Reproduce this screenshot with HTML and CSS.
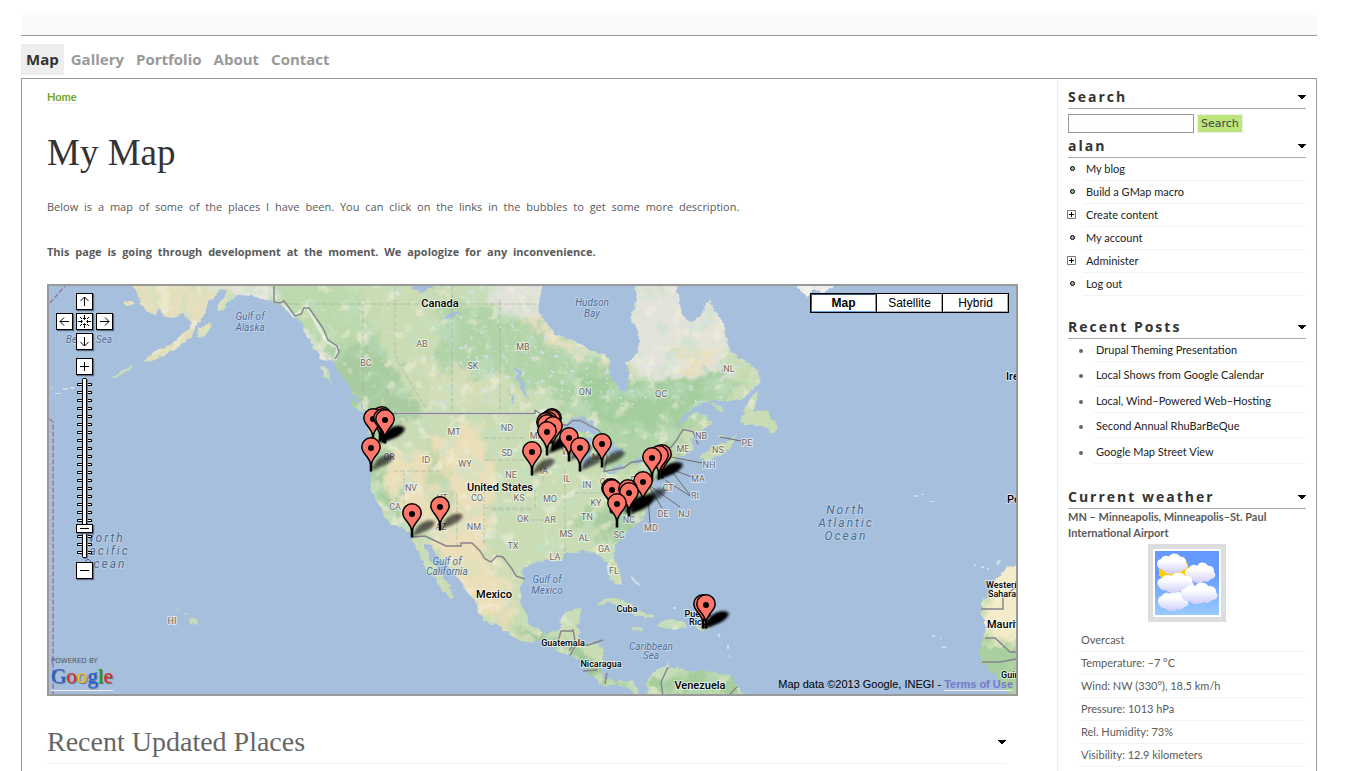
FILE: index.html
```html
<!DOCTYPE html>
<html lang="en">
<head>
<meta charset="utf-8">
<title>My Map</title>
<link rel="stylesheet" href="styles.css">
</head>
<body class="page">
<header class="banner"></header>
<nav class="tabs" aria-label="Primary">
  <a class="tab tab-active" href="#map">Map</a>
  <a class="tab" href="#gallery">Gallery</a>
  <a class="tab" href="#portfolio">Portfolio</a>
  <a class="tab" href="#about">About</a>
  <a class="tab" href="#contact">Contact</a>
</nav>
<div class="frame">
<main class="main">
  <div class="crumbs"><a class="crumb" href="#home">Home</a></div>
  <h1 class="title">My Map</h1>
  <p class="copy">Below is a map of some of the places I have been. You can click on the links in the bubbles to get some more description.</p>
  <p class="copy copy-strong">This page is going through development at the moment. We apologize for any inconvenience.</p>

  <section class="map" id="map" aria-label="Map of places">
    <svg class="map-canvas" viewBox="49 286 967 408" preserveAspectRatio="xMidYMid slice">
      <defs>
        <filter id="rough" x="-2%" y="-2%" width="104%" height="104%"><feTurbulence type="fractalNoise" baseFrequency=".16" numOctaves="3" seed="4"/><feDisplacementMap in="SourceGraphic" scale="6" xChannelSelector="R" yChannelSelector="G"/></filter>
        <filter id="patchy" x="-10%" y="-10%" width="120%" height="120%"><feTurbulence type="fractalNoise" baseFrequency=".06" numOctaves="4" seed="9" result="n"/><feGaussianBlur in="SourceGraphic" stdDeviation="3"/><feDisplacementMap in2="n" scale="32" xChannelSelector="R" yChannelSelector="G"/></filter>
        <filter id="forest" x="0" y="0" width="100%" height="100%"><feTurbulence type="fractalNoise" baseFrequency=".05" numOctaves="5" seed="21"/><feColorMatrix values="0 0 0 0 .55  0 0 0 0 .76  0 0 0 0 .57  5 0 0 0 -2.5"/></filter>
        <filter id="dry" x="0" y="0" width="100%" height="100%"><feTurbulence type="fractalNoise" baseFrequency=".07" numOctaves="5" seed="33"/><feColorMatrix values="0 0 0 0 .93  0 0 0 0 .88  0 0 0 0 .74  0 6 0 0 -3.5"/></filter>
        <filter id="lakes" x="0" y="0" width="100%" height="100%"><feTurbulence type="fractalNoise" baseFrequency=".2" numOctaves="3" seed="14"/><feColorMatrix values="0 0 0 0 .647  0 0 0 0 .749  0 0 0 0 .867  0 0 12 0 -8"/></filter>
        <filter id="soft" x="-40%" y="-60%" width="180%" height="220%"><feGaussianBlur stdDeviation="1.4"/></filter>
        <g id="land">
          <path d="M130 284L137 293 140 303 147 312 157 315 158 308 165 317 173 318 183 313 192 322 187 330 173 343 163 348 153 353 143 361 150 361 163 356 177 349 190 337 200 322 206 312 209 303 214 296 222 289 228 292 219 303 216 311 224 308 232 299 240 293 253 297 267 300 280 304 293 316 301 321 306 334 314 348 322 359 334 361 337 371 348 383 354 395 364 407 368 413 367 425 370 440 371 470 370 480 372 493 378 502 385 517 392 525 405 530 412 537 415 547 422 560 427 572 437 580 440 588 450 599 455 597 450 588 443 578 437 568 430 560 424 544 432 545 435 553 447 565 458 580 467 592 477 603 478 613 487 622 500 627 513 637 528 643 540 642 552 647 560 653 573 656 583 662 588 672 595 680 607 687 617 685 630 689 637 696 648 696 646 682 653 672 662 667 670 663 668 670 678 667 687 672 700 670 717 673 730 675 737 687 745 696 640 696 637 688 633 680 623 682 613 680 605 678 600 670 602 660 603 647 593 643 583 645 578 642 580 632 577 627 582 608 565 612 560 620 563 629 550 633 540 631 530 625 525 612 521 600 520 588 523 578 522 570 530 563 550 560 560 562 565 555 573 552 583 551 593 552 602 557 607 563 608 575 615 584 620 585 621 577 617 563 613 552 618 540 630 530 643 520 645 510 648 503 652 493 653 483 660 477 667 473 673 472 673 463 680 457 693 450 696 447 690 440 700 432 711 425 707 413 693 413 683 423 674 429 684 415 697 406 713 401 730 401 744 398 751 391 760 382 759 372 750 363 740 358 730 350 727 337 722 320 715 310 708 299 703 312 693 323 683 317 680 305 677 293 677 284 635 284 637 300 630 318 638 330 640 347 633 357 625 362 628 373 627 387 623 392 615 383 610 375 609 357 590 350 573 340 555 335 550 327 543 318 538 308 540 297 543 284Z"/>
          <path d="M758 390L747 403 740 423 763 427 775 433 777 427 767 410 753 412 757 400Z"/><path d="M699 458L712 446 727 443 736 434 732 447 710 461Z"/><path d="M711 404l10 2 5 5-9-1zM715 433l12 4-5 1z"/>
          <path d="M596 603L604 599 616 598 628 603 640 611 655 616 647 618 634 614 626 607 610 602 600 605Z"/><path d="M658 623L667 619 680 621 688 627 673 630 658 626Z"/><path d="M632 627l11 1 0 3-10-1zM696 626l14 1 0 3-14 0z"/>
          <path d="M320 366l8 2 2 11 3 6-8-8zM348 397l10 5 9 12-10-4zM198 330l12-8 2 6-9 10-5-1zM125 301l9 0 0 5-9-1zM112 377l18-11 3 1-18 12z"/>
          <path d="M1018 562L1007 567 997 580 992 590 982 603 981 612 985 623 984 637 979 648 982 662 993 673 1000 683 1010 696H1018Z"/><path d="M796 284L807 297 815 289 823 294 836 284Z"/><path d="M190 616l5 3 2 4-6 2zM184 612l4 2-3 1zM176 608l4 1-3 2z"/>
        </g>
        <mask id="landmask" maskUnits="userSpaceOnUse" x="40" y="280" width="990" height="420"><use href="#land" fill="#fff" filter="url(#rough)"/></mask>
        <g id="pin"><path d="M0 23V17C-2 8-9.200 5.500-9.200-1A9.200 9.200 0 0 1 9.200-1C9.200 5.500 2 8 0 17Z" fill="#fe7569" stroke="#000" stroke-width="1.500"/><path d="M0 14v9.500" stroke="#000" stroke-width="2.600"/><circle r="3"/></g>
        <g id="shade" filter="url(#soft)"><path d="M0 23C3 16 5 11 12 8 19 5 25 7 22 11 18 17 8 19 0 23Z"/></g>
      </defs>
      <rect x="40" y="280" width="990" height="420" fill="#a5bfdd"/>
      <g mask="url(#landmask)">
        <rect x="40" y="280" width="990" height="420" fill="#cadcb4"/>
        <g filter="url(#patchy)">
          <path d="M110 280h115v75H110z" fill="#e4dfbc"/>
          <path d="M210 280h60l75 95-50-20-50-50z" fill="#e8e6df"/>
          <path d="M255 280h95l40 70-20 25-45-15z" fill="#bcd8ac"/>
          <path d="M320 350l60-10 45 80-65 5z" fill="#a8cca0"/>
          <path d="M440 300l120 30 70 50 60 0 60 0-60 50-80 50-60-90-110-20z" fill="#b0d3a7"/>
          <path d="M490 280h65v45l-60-15zM630 280h55l40 20 5 70-60 10-45-15z" fill="#e4e3da"/>
          <path d="M520 310l40 25 60 18 0 8-70-15zM670 345l60 10-40 20z" fill="#e8e0bf"/>
          <path d="M560 375h120l50-5-50 50-30 20-60-20z" fill="#a5ce9f"/>
          <path d="M425 365l70 10 20 20-80 15z" fill="#d5ddb6"/>
          <path d="M385 445l30 10 60-35 20 50-10 80 30 40-5 45-40-30-55-85-30-40z" fill="#ebdfb9"/>
          <path d="M368 420h15v60l20 30-10 10-23-40z" fill="#a7ce9f"/>
          <path d="M425 430l15 30 20 50-20 10-15-50z" fill="#c6d6aa"/>
          <path d="M570 520l50-20 40-50 30-10-30 50-40 50z" fill="#a8cca0"/>
          <path d="M480 600l30 28 60 15 60 45-50-15-50-30z" fill="#9cc596"/>
          <path d="M640 675l100-5v26H640z" fill="#a5cc9b"/>
          <path d="M985 550h40v90h-40z" fill="#f4ecc9"/><path d="M975 643h45v55h-45z" fill="#a9cf9f"/>
          <path d="M790 280h50v20h-50z" fill="#f0f0ec"/>
        </g>
        <rect x="40" y="280" width="720" height="420" filter="url(#forest)" opacity=".45"/>
        <rect x="40" y="280" width="720" height="420" filter="url(#dry)" opacity=".5"/>
        <rect x="430" y="280" width="330" height="125" filter="url(#lakes)" opacity=".8"/>
      </g>
      <g fill="#a5bfdd" filter="url(#rough)"><path d="M562 427L572 418 583 417 592 422 600 437 588 431 574 432Z"/><path d="M586 437l5 0-1 14-2 18-5-2 0-15z"/><path d="M598 437l12 3 10 9 2 6-8-3-3 6-5-11z"/><path d="M604 474l16-9 4 1-12 8zM628 462l16-4 3 3-17 3z"/><path d="M514 368l6 2 8 30-5-6zM508 390l7 10-3 2zM410 286l24 0-12 7zM440 320l14-8 8-1-10 7z"/></g>
      <g fill="none" stroke="#fff" stroke-opacity=".5" stroke-width="3"><path d="M397 413.500H535L545 410 560 425"/><path d="M280 301l14 15 13-9 20 35 11 5-3 13"/></g>
      <g fill="none" stroke="#85828c" stroke-width="1.400">
        <path d="M274 286v16l6 1 4-2 11 15 6-2 3-6 5 0 14 20 5 12 9 6 2 6-4 7M393 413.500H535v-3l9 5 15 8 8 2 6-5 7 0 19 10 6 8 2 20-3 13 20-4 7-5 12-2 13-8 15-5 6-8 6-10 10 2 5 13"/>
        <path d="M413 537l12-1 21 10h15v-3h11l8 8 5 8 6 3 6-6 6 1 9 12 4 7 9 3"/>
        <path d="M557 645l4-14h12v-2l2 12-6 10M570 655l6-10h12l15-5M583 671l14-1M605 684l2-11M663 696l-2-14 7-15M730 694l7-7"/>
        <path d="M981 609h22v-12l13-10V581M985 638h10l15 14 6 0M982 662l18 0 16-3"/>
      </g>
      <g fill="none" stroke="#9a9e94" stroke-opacity=".45" stroke-dasharray="5 2"><path d="M395 286v70M452 286v127M500 300v113M543 413v70M280 304h260M363 304V400M395 356l35 60"/><path d="M484 438h42M484 460h44M440 471h-48M484 508h50M457 493v52M404 471v40M484 490v55M535 490v20M492 510h40M525 520h30M565 470v90M575 493h70"/></g>
      <g stroke="#97799b" fill="none" stroke-width="1.500" stroke-dasharray="5 2"><path d="M50 303l15-17M49.500 419l3.500 3v272"/></g>
      <g stroke="#6e6b68" fill="none"><path d="M720 437l21 4M671 457l31 6M676 471l16 6M665 480l25 16M670 469l20 26M650 486l30 21M650 488l12 20M648 495l2 29"/></g>
      <g fill="#dbe5ea" opacity=".8"><path d="M630 576l3 1 3 4 4 3-1 2-4-3-4-5zM673 607h3v2h-3zM718 634h2v3h-2zM727 645h2v4h-2zM729 655h1v3h-1zM932 635h3v2h-3zM940 638h2v1h-2zM942 646h4v2h-4zM914 495h4v2h-4zM921 494h3v1h-3zM930 501h5v1h-5zM974 564h2v2h-2zM981 566h3v2h-3zM987 568h2v2h-2zM996 562l3-2 2 0-3 6zM51 388h2v1h-2zM63 388h5v2h-5zM70 387h4v2h-4zM55 393h6v1h-6z"/></g>
      <g class="label label-state" text-anchor="middle"><text x="366" y="366">BC</text><text x="422" y="347">AB</text><text x="473" y="369">SK</text><text x="523" y="350">MB</text><text x="585" y="395">ON</text><text x="661" y="397">QC</text><text x="729" y="372">NL</text><text x="454" y="435">MT</text><text x="507" y="431">ND</text><text x="507" y="456">SD</text><text x="426" y="463">ID</text><text x="465" y="467">WY</text><text x="389" y="460">OR</text><text x="411" y="491">NV</text><text x="511" y="478">NE</text><text x="442" y="501">UT</text><text x="477" y="501">CO</text><text x="519" y="501">KS</text><text x="395" y="510">CA</text><text x="441" y="530">AZ</text><text x="474" y="530">NM</text><text x="523" y="522">OK</text><text x="513" y="549">TX</text><text x="537" y="439">MN</text><text x="567" y="455">WI</text><text x="597" y="460">MI</text><text x="544" y="474">IA</text><text x="567" y="482">IL</text><text x="587" y="488">IN</text><text x="606" y="485">OH</text><text x="636" y="483">PA</text><text x="550" y="502">MO</text><text x="596" y="506">KY</text><text x="587" y="520">TN</text><text x="550" y="523">AR</text><text x="566" y="537">MS</text><text x="584" y="541">AL</text><text x="604" y="552">GA</text><text x="619" y="538">SC</text><text x="629" y="523">NC</text><text x="555" y="560">LA</text><text x="614" y="574">FL</text><text x="683" y="452">ME</text><text x="701" y="439">NB</text><text x="718" y="453">NS</text><text x="747" y="446">PE</text><text x="709" y="468">NH</text><text x="698" y="482">MA</text><text x="668" y="491">CT</text><text x="695" y="499">RI</text><text x="684" y="517">NJ</text><text x="663" y="517">DE</text><text x="651" y="531">MD</text><text x="172" y="624">HI</text></g>
      <g class="label label-country" text-anchor="middle"><text x="440" y="307">Canada</text><text x="500" y="491">United States</text><text x="494" y="598">Mexico</text><text x="700" y="689">Venezuela</text></g>
      <g class="label label-country label-small" text-anchor="middle"><text x="627" y="612">Cuba</text><text x="563" y="646">Guatemala</text><text x="601" y="667">Nicaragua</text><text x="698" y="617">Puerto</text><text x="698" y="625">Rico</text></g>
      <g class="label label-country"><text x="1006" y="380">Ireland</text><text x="1007" y="503">Portugal</text><text x="987" y="628">Mauritania</text></g>
      <g class="label label-country label-small"><text x="986" y="588">Western</text><text x="988" y="597">Sahara</text><text x="1001" y="678">Guinea</text></g>
      <g class="label label-sea" text-anchor="middle"><text x="250" y="320">Gulf of</text><text x="250" y="331">Alaska</text><text x="592" y="306">Hudson</text><text x="592" y="317">Bay</text><text x="447" y="565">Gulf of</text><text x="447" y="575">California</text><text x="547" y="583">Gulf of</text><text x="547" y="594">Mexico</text><text x="651" y="650">Caribbean</text><text x="651" y="659">Sea</text><text x="89" y="343">Bering Sea</text></g>
      <g class="label label-ocean" text-anchor="middle"><text x="846" y="514">North</text><text x="846" y="527">Atlantic</text><text x="846" y="540">Ocean</text><text x="105" y="542">North</text><text x="105" y="555">Pacific</text><text x="105" y="568">Ocean</text></g>
      <g>
        <g opacity=".6"><use href="#shade" x="371" y="448"/><use href="#shade" x="412" y="514"/><use href="#shade" x="440" y="507"/><use href="#shade" x="532" y="452"/><use href="#shade" x="569" y="438"/><use href="#shade" x="580" y="448"/><use href="#shade" x="602" y="444"/><use href="#shade" x="643" y="482"/></g>
        <use href="#shade" x="382" y="420"/><use href="#shade" x="379" y="420"/><use href="#shade" x="552" y="427"/><use href="#shade" x="548" y="431"/><use href="#shade" x="660" y="456"/><use href="#shade" x="656" y="457"/><use href="#shade" x="624" y="490"/><use href="#shade" x="629" y="492"/><use href="#shade" x="632" y="488"/><use href="#shade" x="706" y="605"/><use href="#shade" x="703" y="606"/>
      </g>
      <g><use href="#pin" x="380" y="418"/><use href="#pin" x="382" y="417"/><use href="#pin" x="373" y="419"/><use href="#pin" x="383" y="419"/><use href="#pin" x="385" y="420"/><use href="#pin" x="371" y="448"/>
      <use href="#pin" x="552" y="419"/><use href="#pin" x="551" y="420"/><use href="#pin" x="548" y="422"/><use href="#pin" x="546" y="423"/><use href="#pin" x="547" y="425"/><use href="#pin" x="553" y="427"/><use href="#pin" x="547" y="432"/><use href="#pin" x="569" y="438"/><use href="#pin" x="602" y="444"/><use href="#pin" x="580" y="448"/><use href="#pin" x="532" y="452"/>
      <use href="#pin" x="662" y="455"/><use href="#pin" x="659" y="456"/><use href="#pin" x="652" y="458"/><use href="#pin" x="643" y="482"/><use href="#pin" x="611" y="489"/><use href="#pin" x="612" y="490"/><use href="#pin" x="628" y="490"/><use href="#pin" x="629" y="493"/><use href="#pin" x="617" y="504"/><use href="#pin" x="440" y="507"/><use href="#pin" x="412" y="514"/><use href="#pin" x="703" y="605"/><use href="#pin" x="706" y="605"/></g>
    </svg>

    <div class="controls">
      <div class="pan">
        <button class="key pan-up" aria-label="Pan up"><svg class="key-icon" viewBox="0 0 13 13"><path d="M6.500 11V2M2.500 6l4-4 4 4"/></svg></button>
        <button class="key pan-left" aria-label="Pan left"><svg class="key-icon" viewBox="0 0 13 13"><path d="M11 6.500H2M6 2.500l-4 4 4 4"/></svg></button>
        <button class="key pan-home" aria-label="Return to last position"><svg class="key-icon" viewBox="0 0 13 13"><path d="M6.500 0v4M6.500 9v4M0 6.500h4M9 6.500h4M5 3l1.500 1.500L8 3M5 10l1.500-1.500L8 10M3 5l1.500 1.500L3 8M10 5L8.500 6.500 10 8M2 2l2 2M11 2L9 4M2 11l2-2M11 11L9 9"/></svg></button>
        <button class="key pan-right" aria-label="Pan right"><svg class="key-icon" viewBox="0 0 13 13"><path d="M2 6.500h9M7 2.500l4 4-4 4"/></svg></button>
        <button class="key pan-down" aria-label="Pan down"><svg class="key-icon" viewBox="0 0 13 13"><path d="M6.500 2v9M2.500 7l4 4 4-4"/></svg></button>
      </div>
      <div class="zoom">
        <button class="key" aria-label="Zoom in"><svg class="key-icon" viewBox="0 0 13 13"><path d="M6.500 2v9M2 6.500h9"/></svg></button>
        <div class="slider">
          <svg class="rail" viewBox="0 0 17 181"><defs><pattern id="ticks" width="17" height="8" patternUnits="userSpaceOnUse"><path d="M2 6.500h14.500v2H2" fill="#6a7c93"/><rect x="1" y="5" width="15" height="3" rx="1"/><rect x="2" y="6" width="13" height="1" fill="#fff"/></pattern></defs><rect y="2" width="17" height="174" fill="url(#ticks)"/><rect x="7" y="1" width="5" height="180" rx="2" fill="#6a7c93"/><rect x="6" width="5" height="180" rx="2"/><rect x="7" y="1" width="3" height="178" fill="#fff"/></svg>
          <input class="range" type="range" min="0" max="172" value="26" aria-label="Zoom level">
        </div>
        <button class="key" aria-label="Zoom out"><svg class="key-icon" viewBox="0 0 13 13"><path d="M2 6.500h9"/></svg></button>
      </div>
    </div>
    <div class="types"><button class="type type-on">Map</button><button class="type">Satellite</button><button class="type">Hybrid</button></div>
    <a class="logo" href="#google"><span class="powered">POWERED BY</span><span class="wordmark"><span class="blue">G</span><span class="red">o</span><span class="yellow">o</span><span class="blue">g</span><span class="green">l</span><span class="red">e</span></span></a>
    <div class="legal">Map data ©2013 Google, INEGI - <a class="terms" href="#terms">Terms of Use</a></div>
  </section>
  <h2 class="updated">Recent Updated Places <svg class="arrow" viewBox="0 0 8 4"><path d="M0 0h8v1H7v1H6v1H5v1H3V3H2V2H1V1H0z"/></svg></h2>
</main>

<aside class="side">
  <h3 class="head">Search <svg class="arrow" viewBox="0 0 8 4"><path d="M0 0h8v1H7v1H6v1H5v1H3V3H2V2H1V1H0z"/></svg></h3>
  <form class="search"><input class="field" type="text" aria-label="Search"><button class="go" type="submit">Search</button></form>
  <h3 class="head">alan <svg class="arrow" viewBox="0 0 8 4"><path d="M0 0h8v1H7v1H6v1H5v1H3V3H2V2H1V1H0z"/></svg></h3>
  <ul class="menu">
    <li class="menu-row"><svg class="mark" viewBox="0 0 9 9"><circle class="ring" cx="5.500" cy="4.500" r="2"/></svg><a class="link" href="#blog">My blog</a></li>
    <li class="menu-row"><svg class="mark" viewBox="0 0 9 9"><circle class="ring" cx="5.500" cy="4.500" r="2"/></svg><a class="link" href="#macro">Build a GMap macro</a></li>
    <li class="menu-row"><svg class="mark" viewBox="0 0 9 9"><path class="box" d="M.5.5h8v8h-8z"/><path class="cross" d="M2 4.500h5M4.500 2v5"/></svg><a class="link" href="#create">Create content</a></li>
    <li class="menu-row"><svg class="mark" viewBox="0 0 9 9"><circle class="ring" cx="5.500" cy="4.500" r="2"/></svg><a class="link" href="#account">My account</a></li>
    <li class="menu-row"><svg class="mark" viewBox="0 0 9 9"><path class="box" d="M.5.5h8v8h-8z"/><path class="cross" d="M2 4.500h5M4.500 2v5"/></svg><a class="link" href="#administer">Administer</a></li>
    <li class="menu-row"><svg class="mark" viewBox="0 0 9 9"><circle class="ring" cx="5.500" cy="4.500" r="2"/></svg><a class="link" href="#logout">Log out</a></li>
  </ul>
  <h3 class="head">Recent Posts <svg class="arrow" viewBox="0 0 8 4"><path d="M0 0h8v1H7v1H6v1H5v1H3V3H2V2H1V1H0z"/></svg></h3>
  <ul class="posts">
    <li class="post"><a class="link" href="#p1">Drupal Theming Presentation</a></li>
    <li class="post"><a class="link" href="#p2">Local Shows from Google Calendar</a></li>
    <li class="post"><a class="link" href="#p3">Local, Wind–Powered Web–Hosting</a></li>
    <li class="post"><a class="link" href="#p4">Second Annual RhuBarBeQue</a></li>
    <li class="post"><a class="link" href="#p5">Google Map Street View</a></li>
  </ul>
  <h3 class="head">Current weather <svg class="arrow" viewBox="0 0 8 4"><path d="M0 0h8v1H7v1H6v1H5v1H3V3H2V2H1V1H0z"/></svg></h3>
  <p class="station">MN – Minneapolis, Minneapolis–St. Paul International Airport</p>
  <svg class="sky" viewBox="0 0 64 64" role="img" aria-label="Overcast">
    <defs><linearGradient id="air" x2="0" y2="1"><stop offset=".35" stop-color="#69f"/><stop offset="1" stop-color="#9cf"/></linearGradient><linearGradient id="puff" x2="0" y2="1"><stop offset=".35" stop-color="#fff"/><stop offset="1" stop-color="#cfcdf8"/></linearGradient>
    <path id="cloud" d="M6 6A5 5 0 0 1 14 4A6 6 0 0 1 25 4A5 5 0 0 1 31 10A4 4 0 0 1 28 17A5 5 0 0 1 21 19A7 5 0 0 1 9 18A5 5 0 0 1 3 14A5 5 0 0 1 6 6Z" fill="url(#puff)"/></defs>
    <path d="M0 0h64v64H0z" fill="url(#air)"/><circle cx="19" cy="19" r="15" fill="#fc0"/>
    <use href="#cloud" x="28" y="11"/><use href="#cloud" x="1" y="39"/><use href="#cloud" transform="translate(0 21) scale(1.200 1)"/><use href="#cloud" transform="translate(23 31) scale(1.220 1.050)"/><use href="#cloud" x="0" y="2"/><path d="M4 17l5 3v5H4z" fill="#fc0"/>
  </svg>
  <ul class="facts"><li class="fact">Overcast</li><li class="fact">Temperature: –7 °C</li><li class="fact">Wind: NW (330°), 18.5 km/h</li><li class="fact">Pressure: 1013 hPa</li><li class="fact">Rel. Humidity: 73%</li><li class="fact">Visibility: 12.9 kilometers</li></ul>
</aside>
</div>
</body>
</html>
```
FILE: styles.css
```css
* { box-sizing: border-box; }
.page { display: flex; flex-direction: column; min-height: 100vh; margin: 0; padding: 15px 39px 0 21px; background: #fff; color: #5a5a5a; font: 11px/16px "Open Sans", "Noto Sans", sans-serif; }
.banner { height: 21px; background: #fafafa; border-bottom: 1px solid #999; }
.tabs { display: flex; gap: 2px; padding: 8px 0 3px; }
.tab { padding: 0 5px 1px; color: #999; font: bold 15px/30px "Open Sans", sans-serif; text-decoration: none; }
.tab-active { background: #eee; color: #333; }
.frame { flex: 1; display: grid; grid-template-columns: minmax(0, 1fr) 259px; border: 1px solid #999; border-bottom: 0; }
.main { padding: 9px 39px 0 25px; }
.crumbs { line-height: 18px; }
.crumb { color: #6fa522; font-family: Lato, sans-serif; font-weight: bold; text-decoration: none; border-bottom: 1px solid #eee; }
.title { margin: 27px 0 25px; color: #333; font: 37px/40px "Liberation Serif", serif; }
.copy { margin: 0 0 27px; line-height: 18px; word-spacing: 3px; }
.copy-strong { margin-bottom: 23px; font-weight: bold; }
.map { position: relative; height: 412px; border: 2px solid #999; overflow: hidden; background: #a5bfdd; }
.map-canvas { display: block; width: 100%; height: 100%; }
.label { font-family: Roboto, sans-serif; paint-order: stroke; stroke: #fff; stroke-opacity: .6; stroke-width: 2px; stroke-linejoin: round; }
.label-state { fill: #70655c; font-size: 9px; }
.label-country { fill: #000; font-size: 11px; font-weight: 500; }
.label-small { font-size: 9px; }
.label-sea { fill: #4e6f9c; font-size: 10px; font-style: italic; stroke-opacity: .25; }
.label-ocean { fill: #4e6b92; font-size: 12px; font-style: italic; letter-spacing: 2px; stroke-opacity: .25; }
.controls { position: absolute; left: 7px; top: 7px; display: flex; flex-direction: column; align-items: center; gap: 8px; }
.pan { display: grid; grid-template: repeat(3, 17px) / repeat(3, 17px); gap: 3px; }
.pan-up { grid-area: 1 / 2; }
.pan-left { grid-area: 2 / 1; }
.pan-home { grid-area: 2 / 2; }
.pan-right { grid-area: 2 / 3; }
.pan-down { grid-area: 3 / 2; }
.key { display: block; width: 17px; height: 17px; padding: 1px; background: #fff; border: 1px solid #000; box-shadow: 1px 1px 1px #5b6b80; }
.key-icon { display: block; width: 13px; height: 13px; fill: none; stroke: #000; }
.zoom { display: grid; gap: 3px; }
.slider { display: grid; height: 181px; }
.rail { grid-area: 1 / 1; width: 17px; height: 181px; }
.range { grid-area: 1 / 1; width: 17px; height: 181px; margin: 0; appearance: none; background: transparent; writing-mode: vertical-lr; direction: rtl; }
.range::-webkit-slider-thumb { appearance: none; width: 17px; height: 9px; border: 1px solid #000; background: linear-gradient(#000, #000) center / 9px 1px no-repeat #fff; box-shadow: 1px 1px 1px #5b6b80; }
.types { position: absolute; top: 7px; right: 7px; display: grid; grid-template-columns: 65px 66px 66px; background: #000; border: 1px solid #000; }
.type { height: 18px; padding: 0; border: 1px solid #fff; border-right-color: #aaa; border-bottom-color: #aaa; background: #fff; color: #000; font: 12px/16px "Liberation Sans", sans-serif; }
.type + .type { margin-left: 1px; }
.type-on { border-color: #345684 #6c9ddf #6c9ddf #345684; font-weight: bold; }
.logo { position: absolute; left: 2px; bottom: 3px; border-bottom: 1px solid #eee; text-decoration: none; }
.powered { display: block; color: #555; font: 7px/8px "DejaVu Sans", sans-serif; }
.wordmark { display: block; padding-bottom: 3px; font: 21px/22px "Liberation Serif", serif; text-shadow: 1px 1px 1px #567; }
.blue { color: #1f5fe0; }
.red { color: #e02a1f; }
.yellow { color: #f2c200; }
.green { color: #129a22; }
.legal { position: absolute; right: 3px; bottom: 3px; color: #000; font: 11px/14px "Liberation Sans", sans-serif; }
.terms { color: #77c; font-weight: bold; text-decoration: none; border-bottom: 1px solid #eee; }
.updated { display: flex; align-items: center; justify-content: space-between; margin: 26px 12px 0 0; padding-bottom: 1px; color: #666; border-bottom: 1px solid #f3f3f3; font: 28px/40px "Liberation Serif", serif; }
.arrow { width: 8px; height: 4px; fill: #000; shape-rendering: crispEdges; }
.side { padding: 7px 10px 4px; border-left: 1px solid #eee; font-family: Lato, sans-serif; }
.head { display: flex; align-items: center; justify-content: space-between; margin: 0; color: #333; border-bottom: 1px solid #aaa; font: bold 14px/22px "Open Sans", sans-serif; letter-spacing: 2px; }
.search { display: flex; align-items: center; gap: 3px; height: 26px; padding-top: 3px; }
.field { width: 126px; height: 19px; background: #fdfdfd; border: 1px solid #999; }
.go { height: 19px; padding: 0 3px; background: #bce67c; border: 1px solid #eee; color: #444; font: 11px/17px "DejaVu Sans", sans-serif; }
.menu, .posts, .facts { margin: 0; padding: 0; list-style: none; }
.menu { margin-bottom: 20px; }
.menu-row { position: relative; margin-left: 15px; padding-left: 3px; border-bottom: 1px solid #f3f3f3; line-height: 22px; }
.mark { position: absolute; left: -16px; top: 6px; width: 9px; height: 9px; }
.ring { fill: #aaa; stroke: #000; }
.box { fill: #fff; stroke: #777; }
.cross { stroke: #000; }
.link { color: #222; text-decoration: none; }
.posts { display: grid; gap: 2px; margin-bottom: 22px; }
.post { position: relative; margin-left: 25px; padding-left: 3px; border-bottom: 1px solid #f3f3f3; line-height: 22px; }
.post:nth-child(even) { margin-bottom: 1px; }
.post::before { content: ""; position: absolute; left: -14px; top: 10px; width: 4px; height: 4px; border-radius: 2px; background: #666; }
.station { margin: 0; font-weight: bold; }
.sky { display: block; width: 78px; height: 78px; margin: 3px auto 7px; padding: 2px; border: 5px solid #ddd; }
.facts { margin-left: 10px; }
.fact { padding-left: 3px; border-bottom: 1px solid #f3f3f3; line-height: 22px; }
```
